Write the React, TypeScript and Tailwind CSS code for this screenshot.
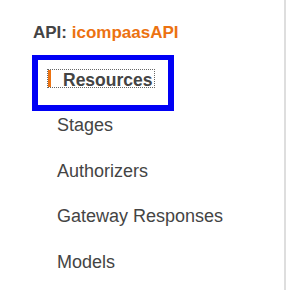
import React from "react";

const items = ["Stages", "Authorizers", "Gateway Responses", "Models"];

export default function App() {
  return (
    <div className="relative w-[290px] h-[290px] bg-white overflow-hidden font-['Liberation_Sans',Arial,sans-serif] text-[#444]">
      <div className="w-[286px] h-full border-r-2 border-[#dedede]">
        <div className="pt-[23px] pl-[33px] text-[17px] leading-[20px] font-bold">
          API: <span className="text-[#ec7211]">icompaasAPI</span>
        </div>
        <ul className="mt-[14px]">
          <li className="h-[45.5px] flex items-start pl-[47px]">
            <span className="mt-[12px] h-[19px] w-[108px] flex border border-dotted border-[#666]">
              <span className="w-[3px] h-full bg-[#ec7211] shrink-0" />
              <span className="ml-[12px] pt-[2px] text-[17.5px] leading-[17px] font-bold whitespace-nowrap">
                Resources
              </span>
            </span>
          </li>
          {items.map((t) => (
            <li key={t} className="h-[45.5px] flex items-center pl-[57px] text-[18px] leading-[20px] whitespace-nowrap">
              {t}
            </li>
          ))}
        </ul>
      </div>
      <div className="absolute left-[32px] top-[55px] w-[142px] h-[56px] border-[6px] border-t-[5px] border-[#0000f5] pointer-events-none" />
    </div>
  );
}
